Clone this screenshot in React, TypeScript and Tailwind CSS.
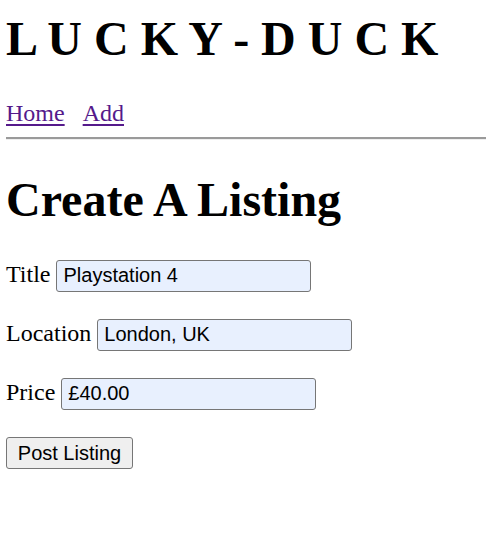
export default function App() {
  const serif = "font-['Liberation_Serif','Times_New_Roman',serif]";
  const sans = "font-['Liberation_Sans',Arial,sans-serif]";

  return (
    <div className={`min-h-[550px] bg-white text-black ${serif}`}>
      <h1 className="ml-[6px] pt-[11px] text-[48px] leading-[55px] font-bold whitespace-pre">
        L U C K Y - D U C K
      </h1>

      <nav className="ml-[6px] mt-[33px] flex gap-[18px] text-[24px] leading-[28px]">
        <a href="#" className="text-[#551a8b] underline decoration-[2px] underline-offset-[3px]">
          Home
        </a>
        <a href="#" className="text-[#551a8b] underline decoration-[2px] underline-offset-[3px]">
          Add
        </a>
      </nav>

      <div className="ml-[6px] mt-[10px] h-[3px] border-t-2 border-b border-t-[#9a9a9a] border-b-[#eeeeee]" />

      <h1 className="ml-[6px] mt-[32px] text-[48px] leading-[55px] font-bold">
        Create A Listing
      </h1>

      <form className="ml-[6px] mt-[29px] flex flex-col items-start gap-[23px]">
        {[
          ["Title", "Playstation 4"],
          ["Location", "London, UK"],
          ["Price", "£40.00"],
        ].map(([label, value]) => (
          <div key={label} className="flex items-baseline gap-[6px] text-[24px]">
            <label>{label}</label>
            <input
              defaultValue={value}
              className={`h-[32px] w-[255px] rounded-[3px] border border-[#767676] bg-[#e8f0fe] pl-[6px] pr-[5px] text-[20px] text-black ${sans}`}
            />
          </div>
        ))}
        <button
          type="button"
          className={`mt-[4px] h-[32px] w-[127px] rounded-[3px] border border-[#767676] bg-[#efefef] text-[20px] text-black ${sans}`}
        >
          Post Listing
        </button>
      </form>
    </div>
  );
}
